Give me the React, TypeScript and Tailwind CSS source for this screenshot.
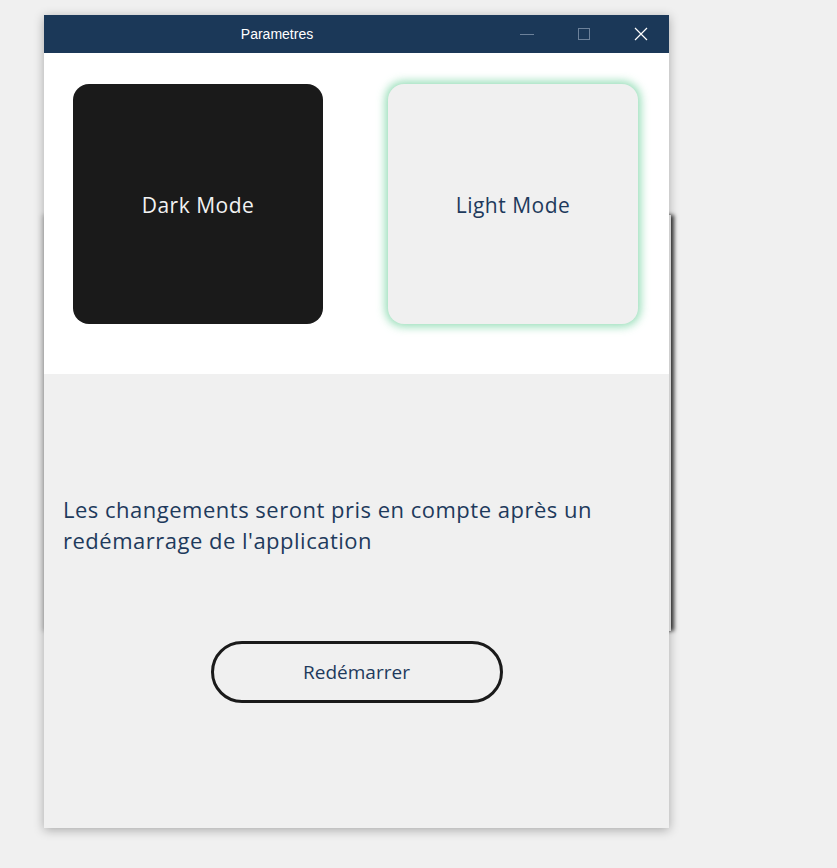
import React from "react";

const font = { fontFamily: "'Open Sans', 'Noto Sans', sans-serif" };

const App = () => {
  return (
    <div className="relative min-h-[868px] w-[837px] bg-[#f0f0f0] pl-[44px] pt-[15px]">
      {/* window behind (only its shadow shows) */}
      <div className="absolute left-[44px] top-[215px] h-[416px] w-[627px] bg-[#f0f0f0] shadow-[3px_0_4px_rgba(0,0,0,0.75),-2px_0_5px_rgba(0,0,0,0.18)]" />

      {/* settings window */}
      <div className="relative flex h-[813px] w-[625px] flex-col bg-[#f0f0f0] shadow-[0_2px_10px_rgba(0,0,0,0.3)]">
        {/* title bar */}
        <div className="flex h-[38px] items-center bg-[#1b3858]">
          <div className="flex-1 pl-[12px] text-center text-[14px] text-white" style={{ fontFamily: "'Liberation Sans', Arial, sans-serif" }}>
            Parametres
          </div>
          <div className="flex h-full">
            <div className="flex w-[57px] items-center justify-center">
              <div className="h-px w-[14px] bg-[#6c819a]" />
            </div>
            <div className="flex w-[57px] items-center justify-center">
              <div className="h-[12px] w-[12px] border border-[#6c819a]" />
            </div>
            <div className="flex w-[57px] items-center justify-center">
              <svg width="14" height="14" viewBox="0 0 14 14" fill="none" stroke="white" strokeWidth="1.2">
                <path d="M1 1 L13 13 M13 1 L1 13" />
              </svg>
            </div>
          </div>
        </div>

        {/* theme picker */}
        <div className="flex h-[321px] justify-between bg-white px-[29px] pt-[31px] tracking-[0.5px]" style={font}>
          <button className="flex h-[240px] w-[250px] items-center justify-center rounded-[16px] bg-[#1a1a1a] pt-[3px] text-[21px] text-[#f2f2f2]">
            Dark Mode
          </button>
          <button className="mr-[2px] flex h-[240px] w-[250px] items-center justify-center rounded-[16px] bg-[#f0f0f0] pt-[3px] text-[21px] text-[#1e3a5c] shadow-[0_0_8px_3px_rgba(130,215,170,0.8)]">
            Light Mode
          </button>
        </div>

        {/* notice */}
        <div className="flex flex-1 flex-col" style={font}>
          <p className="mt-[120px] px-[19px] text-[22px] leading-[31px] tracking-[0.5px] text-[#1e3a5c]">
            Les changements seront pris en compte après un redémarrage de l'application
          </p>
          <div className="mt-[85px] flex justify-center">
            <button className="h-[62px] w-[292px] rounded-full border-[3px] border-[#1a1a1a] text-[19px] text-[#1e3a5c]">
              Redémarrer
            </button>
          </div>
        </div>
      </div>
    </div>
  );
};

export default App;
